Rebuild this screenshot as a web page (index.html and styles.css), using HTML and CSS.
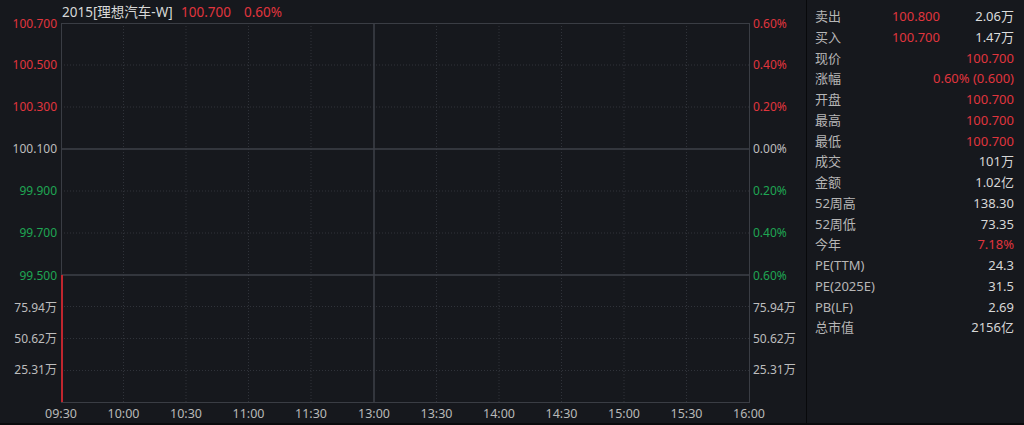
FILE: index.html
```html
<!DOCTYPE html>
<html lang="zh-CN">
<head>
    <meta charset="UTF-8">
    <meta name="viewport" content="width=device-width, initial-scale=1.0">
    <title>2015 理想汽车-W</title>
    <link rel="stylesheet" href="styles.css">
</head>
<body>
    <div class="screen">
        <div class="chart">
            <svg class="chart-svg" width="806" height="423" viewBox="0 0 806 423">
                <!-- header -->
                <text class="title" x="62" y="17">2015[理想汽车-W]</text>
                <text class="title up" x="181" y="17">100.700</text>
                <text class="title up" x="244" y="17">0.60%</text>

                <!-- dotted grid -->
                <g class="grid-dot">
                    <line x1="61" y1="65" x2="749" y2="65"/>
                    <line x1="61" y1="107" x2="749" y2="107"/>
                    <line x1="61" y1="191" x2="749" y2="191"/>
                    <line x1="61" y1="233" x2="749" y2="233"/>
                    <line x1="61" y1="306.5" x2="749" y2="306.5"/>
                    <line x1="61" y1="338.5" x2="749" y2="338.5"/>
                    <line x1="61" y1="370.5" x2="749" y2="370.5"/>
                    <line x1="123.5" y1="23" x2="123.5" y2="402"/>
                    <line x1="186" y1="23" x2="186" y2="402"/>
                    <line x1="248.5" y1="23" x2="248.5" y2="402"/>
                    <line x1="311" y1="23" x2="311" y2="402"/>
                    <line x1="436.5" y1="23" x2="436.5" y2="402"/>
                    <line x1="499" y1="23" x2="499" y2="402"/>
                    <line x1="561.5" y1="23" x2="561.5" y2="402"/>
                    <line x1="624" y1="23" x2="624" y2="402"/>
                    <line x1="686.5" y1="23" x2="686.5" y2="402"/>
                </g>

                <!-- solid lines -->
                <g class="grid-solid">
                    <line x1="61" y1="149" x2="749" y2="149"/>
                    <line x1="61" y1="275" x2="749" y2="275"/>
                    <line x1="374" y1="23" x2="374" y2="402"/>
                </g>
                <rect class="frame" x="61.5" y="23.5" width="688" height="379"/>

                <!-- opening volume bar -->
                <line class="vol" x1="62" y1="275" x2="62" y2="402"/>

                <!-- left axis -->
                <g class="axis-left">
                    <text class="up" x="57" y="28">100.700</text>
                    <text class="up" x="57" y="69">100.500</text>
                    <text class="up" x="57" y="111">100.300</text>
                    <text class="flat" x="57" y="153">100.100</text>
                    <text class="down" x="57" y="195">99.900</text>
                    <text class="down" x="57" y="237">99.700</text>
                    <text class="down" x="57" y="280">99.500</text>
                    <text class="flat" x="57" y="312">75.94万</text>
                    <text class="flat" x="57" y="343">50.62万</text>
                    <text class="flat" x="57" y="374">25.31万</text>
                </g>

                <!-- right axis -->
                <g class="axis-right">
                    <text class="up" x="753" y="28">0.60%</text>
                    <text class="up" x="753" y="69">0.40%</text>
                    <text class="up" x="753" y="111">0.20%</text>
                    <text class="flat" x="753" y="153">0.00%</text>
                    <text class="down" x="753" y="195">0.20%</text>
                    <text class="down" x="753" y="237">0.40%</text>
                    <text class="down" x="753" y="280">0.60%</text>
                    <text class="flat" x="753" y="312">75.94万</text>
                    <text class="flat" x="753" y="343">50.62万</text>
                    <text class="flat" x="753" y="374">25.31万</text>
                </g>

                <!-- time axis -->
                <g class="axis-time">
                    <text x="61" y="418">09:30</text>
                    <text x="123.5" y="418">10:00</text>
                    <text x="186" y="418">10:30</text>
                    <text x="248.5" y="418">11:00</text>
                    <text x="311" y="418">11:30</text>
                    <text x="374" y="418">13:00</text>
                    <text x="436.5" y="418">13:30</text>
                    <text x="499" y="418">14:00</text>
                    <text x="561.5" y="418">14:30</text>
                    <text x="624" y="418">15:00</text>
                    <text x="686.5" y="418">15:30</text>
                    <text x="749" y="418">16:00</text>
                </g>
            </svg>
        </div>

        <div class="quote">
            <span class="label">卖出</span><span class="mid up">100.800</span><span class="val">2.06万</span>
            <span class="label">买入</span><span class="mid up">100.700</span><span class="val">1.47万</span>
            <span class="label">现价</span><span class="wide up">100.700</span>
            <span class="label">涨幅</span><span class="wide up">0.60% (0.600)</span>
            <span class="label">开盘</span><span class="wide up">100.700</span>
            <span class="label">最高</span><span class="wide up">100.700</span>
            <span class="label">最低</span><span class="wide up">100.700</span>
            <span class="label">成交</span><span class="wide">101万</span>
            <span class="label">金额</span><span class="wide">1.02亿</span>
            <span class="label">52周高</span><span class="wide">138.30</span>
            <span class="label">52周低</span><span class="wide">73.35</span>
            <span class="label">今年</span><span class="wide up">7.18%</span>
            <span class="label">PE(TTM)</span><span class="wide">24.3</span>
            <span class="label">PE(2025E)</span><span class="wide">31.5</span>
            <span class="label">PB(LF)</span><span class="wide">2.69</span>
            <span class="label">总市值</span><span class="wide">2156亿</span>
        </div>
    </div>
</body>
</html>
```

FILE: styles.css
```css
body {
    margin: 0;
    background: #0c0d10;
    font-family: 'Noto Sans', 'Noto Sans CJK SC', sans-serif;
    font-size: 12px;
    color: #d6d6d6;
}
.screen {
    display: flex;
    width: 1024px;
    height: 423px;
    border-bottom: 2px solid #0a0b0d;
    background: #16181d;
}
.chart {
    width: 806px;
    height: 423px;
}
.chart-svg {
    display: block;
    font-family: 'Noto Sans', 'Noto Sans CJK SC', sans-serif;
    font-size: 12px;
}
.title {
    fill: #d8d8d8;
    font-size: 13.5px;
}
.up {
    fill: #e0353d;
    color: #e0353d;
}
.title.up {
    fill: #e0353d;
}
.down {
    fill: #1fa653;
}
.flat {
    fill: #bdbdbd;
}
.grid-dot line {
    stroke: #30333a;
    stroke-width: 1;
    stroke-dasharray: 1 2;
}
.grid-solid line {
    stroke: #3e4148;
    stroke-width: 1.5;
}
.frame {
    fill: none;
    stroke: #3a3d44;
    stroke-width: 1;
}
.vol {
    stroke: #c0262e;
    stroke-width: 2;
}
.axis-left text {
    text-anchor: end;
}
.axis-time text {
    text-anchor: middle;
    fill: #b8b8b8;
    font-size: 12.5px;
}
.quote {
    flex: 1;
    border-left: 1px solid #08090b;
    padding: 6px 10px 0 8px;
    display: grid;
    grid-template-columns: 64px 1fr 74px;
    grid-auto-rows: 20.75px;
    align-content: start;
    line-height: 20.75px;
    font-size: 13px;
}
.label {
    color: #b6b6b6;
}
.mid {
    text-align: right;
}
.val {
    text-align: right;
    color: #dcdcdc;
}
.wide {
    grid-column: 2 / 4;
    text-align: right;
    color: #d6d6d6;
}
.wide.up, .mid.up {
    color: #e0353d;
}
```
